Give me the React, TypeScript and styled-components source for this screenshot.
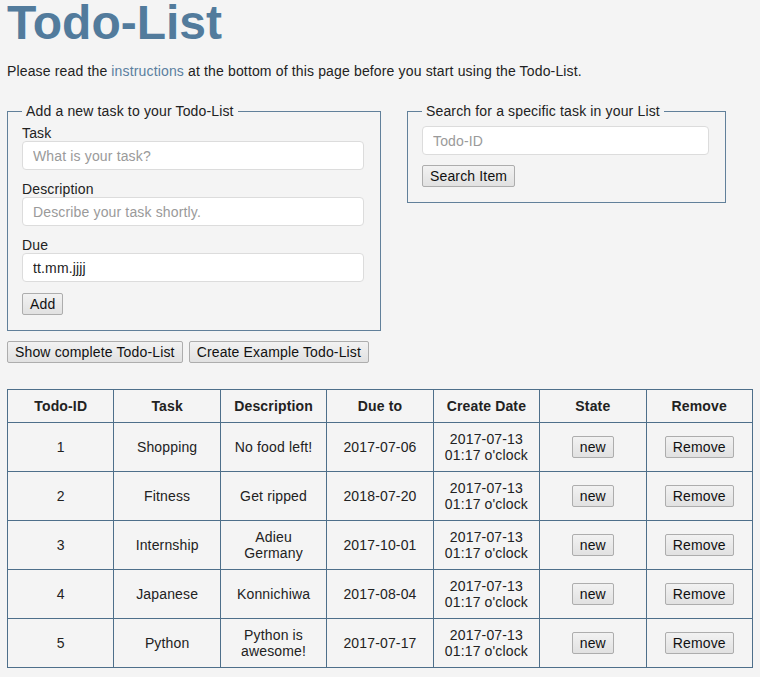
import React from "react";
import styled, { createGlobalStyle } from "styled-components";

const Global = createGlobalStyle`
  html, body { margin: 0; padding: 0; background: #f4f4f4; }
  body { font-family: "Liberation Sans", Arial, sans-serif; font-size: 14px; color: #222; letter-spacing: 0.15px; }
`;

const Page = styled.div`
  padding: 0 7px 10px;
`;

const Title = styled.h1`
  margin: 0;
  font-size: 48px;
  line-height: 46px;
  font-weight: bold;
  letter-spacing: 0;
  color: #527b9c;
`;

const Intro = styled.p`
  margin: 17px 0 0;
  line-height: 16px;
`;

const Link = styled.a`
  color: #5a7f9f;
  text-decoration: none;
`;

const Forms = styled.div`
  display: flex;
  align-items: flex-start;
  gap: 26px;
  margin-top: 24px;
`;

const Box = styled.fieldset<{ $w: number }>`
  box-sizing: border-box;
  width: ${(p) => p.$w}px;
  margin: 0;
  border: 1px solid #61809a;
  padding: 7px 16px 15px 14px;
  display: flex;
  flex-direction: column;
  align-items: flex-start;
`;

const Legend = styled.legend`
  padding: 0 4px;
  line-height: 16px;
  font-size: 14px;
  color: #222;
`;

const Label = styled.label<{ $first?: boolean }>`
  display: block;
  line-height: 15px;
  margin-top: ${(p) => (p.$first ? "0" : "12px")};
`;

const Input = styled.input`
  box-sizing: border-box;
  width: 100%;
  height: 29px;
  border: 1px solid #dcdcdc;
  border-radius: 4px;
  background: #fff;
  padding: 0 10px;
  font-family: "Liberation Sans", Arial, sans-serif;
  font-size: 14px;
  letter-spacing: 0.15px;
  color: #222;
  outline: none;
  &::placeholder { color: #9a9a9a; }
`;

const Button = styled.button<{ $mt?: number }>`
  height: 22px;
  padding: 0 7px;
  margin-top: ${(p) => p.$mt ?? 0}px;
  border: 1px solid #adadad;
  border-radius: 2px;
  background: linear-gradient(#f2f2f2, #e1e1e1);
  font-family: "Liberation Sans", Arial, sans-serif;
  font-size: 14px;
  letter-spacing: 0.15px;
  color: #111;
  line-height: 20px;
  cursor: pointer;
`;

const Actions = styled.div`
  display: flex;
  gap: 6px;
  margin-top: 10px;
`;

const Table = styled.table`
  width: 100%;
  margin-top: 26px;
  border-collapse: collapse;
  table-layout: fixed;
`;

const Th = styled.th`
  border: 1px solid #4e6f8a;
  padding: 8px 6px;
  line-height: 16px;
  font-weight: bold;
  text-align: center;
`;

const Td = styled.td`
  border: 1px solid #4e6f8a;
  padding: 8px 6px;
  line-height: 16px;
  text-align: center;
  vertical-align: middle;
`;

const rows = [
  { id: 1, task: "Shopping", desc: "No food left!", due: "2017-07-06" },
  { id: 2, task: "Fitness", desc: "Get ripped", due: "2018-07-20" },
  { id: 3, task: "Internship", desc: "Adieu Germany", due: "2017-10-01" },
  { id: 4, task: "Japanese", desc: "Konnichiwa", due: "2017-08-04" },
  { id: 5, task: "Python", desc: "Python is awesome!", due: "2017-07-17" },
];

export default function App() {
  return (
    <Page>
      <Global />
      <Title>Todo-List</Title>
      <Intro>
        Please read the <Link href="#">instructions</Link> at the bottom of this page before you start using the Todo-List.
      </Intro>
      <Forms>
        <Box $w={374}>
          <Legend>Add a new task to your Todo-List</Legend>
          <Label $first>Task</Label>
          <Input placeholder="What is your task?" />
          <Label>Description</Label>
          <Input placeholder="Describe your task shortly." />
          <Label>Due</Label>
          <Input defaultValue="tt.mm.jjjj" />
          <Button $mt={11}>Add</Button>
        </Box>
        <Box $w={319}>
          <Legend>Search for a specific task in your List</Legend>
          <Input placeholder="Todo-ID" />
          <Button $mt={10}>Search Item</Button>
        </Box>
      </Forms>
      <Actions>
        <Button>Show complete Todo-List</Button>
        <Button>Create Example Todo-List</Button>
      </Actions>
      <Table>
        <thead>
          <tr>
            <Th>Todo-ID</Th>
            <Th>Task</Th>
            <Th>Description</Th>
            <Th>Due to</Th>
            <Th>Create Date</Th>
            <Th>State</Th>
            <Th>Remove</Th>
          </tr>
        </thead>
        <tbody>
          {rows.map((r) => (
            <tr key={r.id}>
              <Td>{r.id}</Td>
              <Td>{r.task}</Td>
              <Td>{r.desc}</Td>
              <Td>{r.due}</Td>
              <Td>
                2017-07-13
                <br />
                01:17 o'clock
              </Td>
              <Td>
                <Button>new</Button>
              </Td>
              <Td>
                <Button>Remove</Button>
              </Td>
            </tr>
          ))}
        </tbody>
      </Table>
    </Page>
  );
}
